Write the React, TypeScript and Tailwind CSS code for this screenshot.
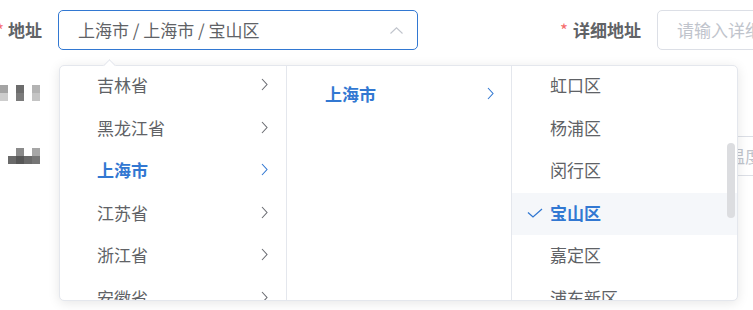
import React from 'react'

/**
 * 地址级联选择 — 表单中展开的省 / 市 / 区 下拉面板
 */

const BLUE = 'text-[#3278d2]'

const provinces = ['吉林省', '黑龙江省', '上海市', '江苏省', '浙江省', '安徽省']
const districts = ['虹口区', '杨浦区', '闵行区', '宝山区', '嘉定区', '浦东新区']

function ArrowRight({ active }: { active?: boolean }) {
  return (
    <svg width="7" height="13" viewBox="0 0 7 13" className={active ? BLUE : 'text-[#6b6d73]'}>
      <path d="M1 1 L6 6.5 L1 12" fill="none" stroke="currentColor" strokeWidth="1.1" />
    </svg>
  )
}

function ArrowUp() {
  return (
    <svg width="13" height="7" viewBox="0 0 13 7" className="text-[#c0c4cc]">
      <path d="M0.5 6.5 L6.5 0.8 L12.5 6.5" fill="none" stroke="currentColor" strokeWidth="1.1" />
    </svg>
  )
}

function Check() {
  return (
    <svg width="16" height="10" viewBox="0 0 16 10" className={BLUE}>
      <path d="M1 4.5 L6 9 L15 1" fill="none" stroke="currentColor" strokeWidth="1.3" />
    </svg>
  )
}

// 打码后的标签
function Mosaic({ rows }: { rows: string[][] }) {
  return (
    <div className="flex flex-col">
      {rows.map((row, i) => (
        <div key={i} className="flex">
          {row.map((c, j) => (
            <div key={j} className={`w-[8px] h-[8px] ${c}`} />
          ))}
        </div>
      ))}
    </div>
  )
}

export default function App() {
  return (
    <div className="relative w-[753px] h-[310px] overflow-hidden bg-white font-['Noto_Sans_CJK_SC','Noto_Sans',sans-serif] text-[17px] text-[#606266]">
      {/* 表单 */}
      <div className="flex flex-col">
        <div className="mt-[10px] h-[40px] flex items-center">
          <div className="w-[58px] shrink-0 flex justify-end items-center pr-[16px] font-bold whitespace-nowrap">
            <span className="text-[#f56c6c] mr-[4px] font-normal">*</span>
            地址
          </div>
          <div className="w-[360px] h-[40px] shrink-0 rounded-[5px] border border-[#3278d2] flex items-center pl-[19px] pr-[14px]">
            <span className="flex-1 whitespace-nowrap">上海市 / 上海市 / 宝山区</span>
            <ArrowUp />
          </div>
          <div className="w-[239px] shrink-0 flex justify-end items-center pr-[16px] font-bold whitespace-nowrap">
            <span className="text-[#f56c6c] mr-[5px] font-normal">*</span>
            详细地址
          </div>
          <div className="w-[200px] h-[40px] shrink-0 rounded-[5px] border border-[#dcdfe6] flex items-center pl-[19px] text-[#c0c4cc] whitespace-nowrap">
            请输入详细地址
          </div>
        </div>

        <div className="mt-[23px] h-[40px] flex items-center">
          <Mosaic
            rows={[
              ['bg-[#a4a4a4]', 'bg-white', 'bg-[#6c6c6c]', 'bg-white', 'bg-[#b3b3b3]'],
              ['bg-[#cdcdcd]', 'bg-white', 'bg-[#7b7b7b]', 'bg-white', 'bg-[#c4c4c4]'],
            ]}
          />
        </div>

        <div className="mt-[23px] h-[40px] flex items-center">
          <div className="w-[58px] shrink-0">
            <Mosaic
              rows={[
                ['bg-white', 'bg-white', 'bg-[#8a8a8a]', 'bg-white', 'bg-[#a6a6a6]'],
                ['bg-white', 'bg-[#6a6a6a]', 'bg-[#575757]', 'bg-[#6a6a6a]', 'bg-[#767676]'],
              ]}
            />
          </div>
          <div className="w-[360px] shrink-0" />
          <div className="w-[239px] shrink-0" />
          <div className="w-[200px] h-[40px] shrink-0 rounded-[5px] border border-[#dcdfe6] flex items-center pl-[19px] text-[#c0c4cc] whitespace-nowrap">
            请输入温度
          </div>
        </div>
      </div>

      {/* 级联下拉面板 */}
      <div className="absolute left-[59px] top-[65px] w-[679px] h-[236px] bg-white border border-[#e4e7ed] rounded-[5px] shadow-[0_2px_12px_0_rgba(0,0,0,0.1)]">
        <div className="absolute left-[45px] -top-[5px] w-[9px] h-[9px] rotate-45 bg-white border-l border-t border-[#e4e7ed]" />
        <div className="relative flex h-full rounded-[5px] overflow-hidden">
          {/* 省 */}
          <div className="relative h-full w-[227px] shrink-0 overflow-hidden border-r border-[#e4e7ed]">
            <ul className="-mt-[2.5px]">
              {provinces.map((p) => {
                const active = p === '上海市'
                return (
                  <li key={p} className="h-[42.5px] flex items-center pl-[37px] pr-[18px]">
                    <span className={`flex-1 ${active ? `${BLUE} font-bold` : ''}`}>{p}</span>
                    <ArrowRight active={active} />
                  </li>
                )
              })}
            </ul>
          </div>
          {/* 市 */}
          <div className="relative h-full w-[225px] shrink-0 overflow-hidden border-r border-[#e4e7ed]">
            <ul className="pt-[6.5px]">
              <li className="h-[42.5px] flex items-center pl-[38px] pr-[17px]">
                <span className={`flex-1 font-bold ${BLUE}`}>上海市</span>
                <ArrowRight active />
              </li>
            </ul>
          </div>
          {/* 区 */}
          <div className="relative h-full flex-1 overflow-hidden">
            <ul className="-mt-[1px]">
              {districts.map((d) => {
                const active = d === '宝山区'
                return (
                  <li
                    key={d}
                    className={`relative h-[42.5px] flex items-center pl-[38px] ${active ? 'bg-[#f5f7fa]' : ''}`}
                  >
                    {active && (
                      <span className="absolute left-[15px] top-[15px]">
                        <Check />
                      </span>
                    )}
                    <span className={`-mt-[3px] ${active ? `${BLUE} font-bold` : ''}`}>{d}</span>
                  </li>
                )
              })}
            </ul>
            <div className="absolute right-[2px] top-[77px] w-[8px] h-[75px] rounded-full bg-[#dcdde0]" />
          </div>
        </div>
      </div>
    </div>
  )
}
